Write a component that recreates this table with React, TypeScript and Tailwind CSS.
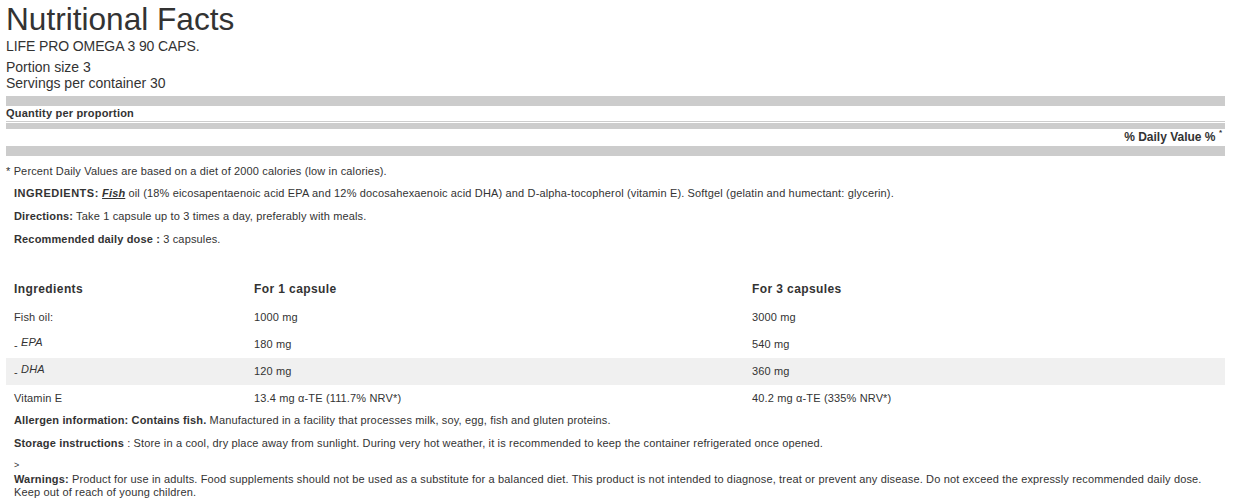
export default function App() {
  const rows = [
    { name: "Fish oil:", one: "1000 mg", three: "3000 mg", sub: false, shade: false, h: "h-[28px]" },
    { name: "EPA", one: "180 mg", three: "540 mg", sub: true, shade: false, h: "h-[27px]" },
    { name: "DHA", one: "120 mg", three: "360 mg", sub: true, shade: true, h: "h-[27px]" },
    { name: "Vitamin E", one: "13.4 mg α-TE (111.7% NRV*)", three: "40.2 mg α-TE (335% NRV*)", sub: false, shade: false, h: "h-[27px]" },
  ];
  return (
    <div className="w-[1234px] h-[504px] overflow-hidden bg-white text-[#333] font-['Liberation_Sans',Arial,sans-serif]">
      <div className="pl-[6px] pr-[9px]">
        <h1 className="mt-[1px] text-[31.6px] leading-[36px] font-normal text-[#333]">Nutritional Facts</h1>
        <div className="mt-[1px] text-[14px] leading-[16px] tracking-[-0.1px]">LIFE PRO OMEGA 3 90 CAPS.</div>
        <div className="mt-[5px] text-[14px] leading-[16px]">Portion size 3</div>
        <div className="text-[14px] leading-[16px]">Servings per container 30</div>
        <div className="mt-[5px] h-[10px] bg-[#ccc]" />
        <div className="border-b border-[#ccc] text-[11px] font-bold leading-[15px] tracking-[0.2px]">Quantity per proportion</div>
        <div className="mt-[1px] h-[6px] bg-[#ccc]" />
        <div className="pr-[3px] text-right text-[12px] font-bold leading-[17px]">
          % Daily Value % <span className="align-top text-[8px] leading-[8px]">*</span>
        </div>
        <div className="h-[10px] bg-[#ccc]" />

        <div className="mt-[4px] text-[11px] leading-[22px] tracking-[0.15px]">
          * Percent Daily Values are based on a diet of 2000 calories (low in calories).
        </div>
        <div className="pl-[8px] text-[11px] tracking-[0.15px]">
          <p className="leading-[23px]">
            <b className="tracking-[0.5px]">INGREDIENTS:</b>{" "}
            <b className="italic underline">Fish</b> oil (18% eicosapentaenoic acid EPA and 12% docosahexaenoic acid DHA) and D-alpha-tocopherol (vitamin E). Softgel (gelatin and humectant: glycerin).
          </p>
          <p className="leading-[23px]">
            <b>Directions:</b> Take 1 capsule up to 3 times a day, preferably with meals.
          </p>
          <p className="leading-[23px]">
            <b>Recommended daily dose :</b> 3 capsules.
          </p>
        </div>

        <div className="mt-[23px] text-[11px] tracking-[0.15px]">
          <div className="grid h-[29px] grid-cols-[240px_498px_1fr] items-center pl-[8px] text-[12px] font-bold tracking-[0.4px]">
            <div>Ingredients</div>
            <div>For 1 capsule</div>
            <div>For 3 capsules</div>
          </div>
          {rows.map((r) => (
            <div
              key={r.name}
              className={`grid ${r.h} grid-cols-[240px_498px_1fr] items-center pl-[8px] ${r.shade ? "bg-[#f0f0f0]" : ""}`}
            >
              <div className={r.sub ? "-translate-y-[2px]" : ""}>
                {r.sub ? (
                  <>
                    <span className="inline-block translate-y-[3px]">-</span> <i>{r.name}</i>
                  </>
                ) : (
                  r.name
                )}
              </div>
              <div>{r.one}</div>
              <div>{r.three}</div>
            </div>
          ))}
        </div>

        <div className="pl-[8px] text-[11px] tracking-[0.15px]">
          <p className="leading-[16px]">
            <b>Allergen information: Contains fish.</b> Manufactured in a facility that processes milk, soy, egg, fish and gluten proteins.
          </p>
          <p className="mt-[7px] leading-[16px]">
            <b>Storage instructions</b> : Store in a cool, dry place away from sunlight. During very hot weather, it is recommended to keep the container refrigerated once opened.
          </p>
          <p className="mt-[9px] text-[9px] leading-[11px]">&gt;</p>
          <p className="mt-[2px] leading-[13px]">
            <b>Warnings:</b> Product for use in adults. Food supplements should not be used as a substitute for a balanced diet. This product is not intended to diagnose, treat or prevent any disease. Do not exceed the expressly recommended daily dose. Keep out of reach of young children.
          </p>
        </div>
      </div>
    </div>
  );
}
